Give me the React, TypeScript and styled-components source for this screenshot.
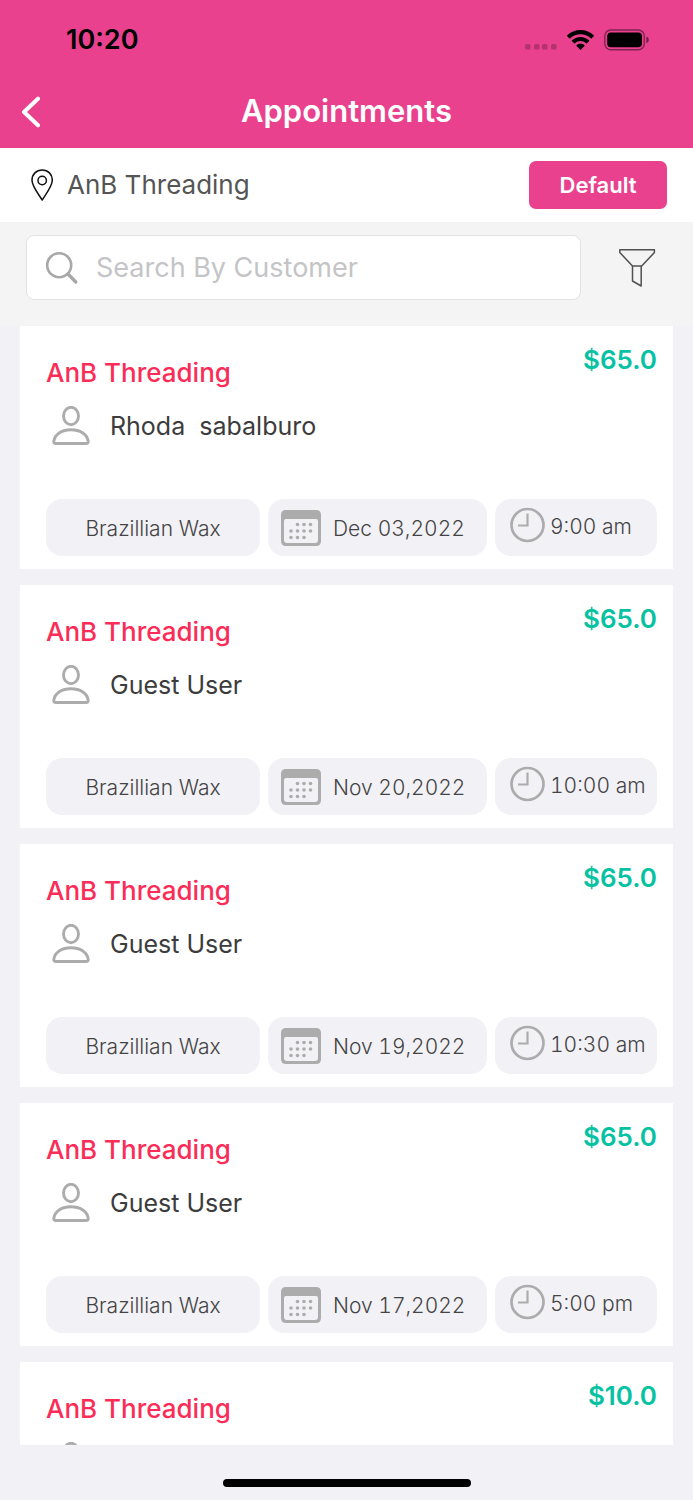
import React from "react";
import styled, { createGlobalStyle } from "styled-components";

const GlobalStyle = createGlobalStyle`
  *, *::before, *::after { box-sizing: border-box; }
  html, body { margin: 0; padding: 0; background: #f2f1f6; }
  body, button, input { font-family: Inter, "Liberation Sans", sans-serif; }
  svg { display: block; flex: none; }
`;

const Screen = styled.div`
  display: flex;
  flex-direction: column;
  height: 100vh;
  background: #f2f1f6;
`;

const Header = styled.header`
  flex: none;
  background: #e9418e;
`;

const StatusBar = styled.div`
  display: flex;
  align-items: center;
  justify-content: space-between;
  height: 74px;
  padding: 6px 44px 0 66px;
`;

const StatusTime = styled.span`
  color: #000;
  font-size: 27px;
  font-weight: 600;
  line-height: 32px;
`;

const StatusIcons = styled.div`
  display: flex;
  align-items: center;
  gap: 10px;
`;

const NavBar = styled.div`
  display: grid;
  grid-template-columns: 60px 1fr 60px;
  align-items: center;
  height: 74px;
`;

const BackButton = styled.button`
  display: flex;
  align-items: center;
  height: 48px;
  padding: 2px 0 0 20px;
  border: 0;
  background: none;
  cursor: pointer;
`;

const NavTitle = styled.h1`
  margin: 0;
  color: #fff;
  font-size: 31px;
  font-weight: 600;
  line-height: 40px;
  text-align: center;
`;

const LocationBar = styled.div`
  display: flex;
  flex: none;
  align-items: center;
  gap: 14px;
  height: 74px;
  padding: 0 26px 0 31px;
  background: #fff;
`;

const LocationName = styled.span`
  flex: 1;
  color: #555;
  font-size: 26px;
  line-height: 40px;
`;

const DefaultButton = styled.button`
  width: 138px;
  height: 48px;
  padding: 0;
  border: 0;
  border-radius: 7px;
  background: #e9418e;
  color: #fff;
  font-size: 22px;
  font-weight: 600;
  cursor: pointer;
`;

const SearchBar = styled.form`
  display: flex;
  flex: none;
  align-items: center;
  gap: 36px;
  padding: 13px 36px 26px 26px;
  background: #f4f4f4;
`;

const SearchField = styled.label`
  display: flex;
  flex: 1;
  align-items: center;
  gap: 17px;
  min-width: 0;
  height: 65px;
  padding: 0 18px;
  border: 1px solid #e2e2e2;
  border-radius: 8px;
  background: #fff;
`;

const SearchInput = styled.input`
  flex: 1;
  min-width: 0;
  height: 40px;
  padding: 0;
  border: 0;
  outline: 0;
  background: none;
  color: #444;
  font-size: 27px;

  &::placeholder { color: #c4c4c6; opacity: 1; }
`;

const IconButton = styled.button`
  padding: 0;
  border: 0;
  background: none;
  cursor: pointer;
`;

const List = styled.ul`
  display: flex;
  flex: 1;
  flex-direction: column;
  gap: 16px;
  min-height: 0;
  margin: 0;
  padding: 0 20px;
  overflow-y: auto;
  scrollbar-width: none;
  list-style: none;
`;

const Card = styled.li`
  flex: none;
  padding: 13px 16px 13px 26px;
  background: #fff;
`;

const CardHeader = styled.div`
  display: flex;
  align-items: flex-start;
  justify-content: space-between;
`;

const Salon = styled.h2`
  margin: 0;
  padding-top: 14px;
  color: #fb2d58;
  font-size: 26px;
  font-weight: 500;
  line-height: 40px;
`;

const Price = styled.span`
  color: #06c2a2;
  font-size: 26px;
  font-weight: 600;
  line-height: 42px;
`;

const Customer = styled.div`
  display: flex;
  align-items: center;
  gap: 20px;
  padding: 13px 0 53px 6px;
  color: #3c3c3c;
  font-size: 25px;
  line-height: 40px;
  white-space: pre;
`;

const Chips = styled.div`
  display: grid;
  grid-template-columns: 214fr 219fr 162fr;
  gap: 8px;
`;

const Chip = styled.span<{ $gap?: number; $pad?: number; $center?: boolean }>`
  display: flex;
  align-items: center;
  justify-content: ${(p) => (p.$center ? "center" : "flex-start")};
  gap: ${(p) => p.$gap ?? 0}px;
  height: 57px;
  padding-top: 1px;
  padding-left: ${(p) => p.$pad ?? 0}px;
  border-radius: 16px;
  background: #f2f1f6;
  color: #444;
  font-size: 21px;
  font-weight: 300;
  font-variant-numeric: tabular-nums;
  white-space: nowrap;
`;

const HomeArea = styled.footer`
  display: flex;
  flex: none;
  align-items: flex-end;
  justify-content: center;
  height: 55px;
  padding-bottom: 13px;
`;

const HomeIndicator = styled.span`
  width: 248px;
  height: 8px;
  border-radius: 4px;
  background: #000;
`;

const SignalDots = () => (
  <svg width="32" height="22" viewBox="0 0 32 22" fill="#000" opacity="0.22" aria-hidden="true">
    {[0, 9, 17, 26].map((x) => (
      <rect key={x} x={x} y="15" width="5.5" height="5.5" rx="1.6" />
    ))}
  </svg>
);

const WifiIcon = () => (
  <svg width="27" height="22" viewBox="0 0 27 22" fill="#000" aria-hidden="true">
    <path d="M13.500 1C18.700 1 23.300 3 26.700 6.300Q27.100 6.800 26.700 7.300L24.700 9.300Q24.200 9.700 23.700 9.300C21 6.700 17.400 5.200 13.500 5.200S6 6.700 3.300 9.300Q2.800 9.700 2.300 9.300L.3 7.300Q-.1 6.800 .3 6.300C3.700 3 8.300 1 13.500 1Z" />
    <path d="M13.500 7.900c3.300 0 6.300 1.300 8.500 3.300q.5.500 0 1l-2.100 2q-.4.400-.9 0c-1.500-1.300-3.400-2.100-5.500-2.100s-4 .8-5.500 2.100q-.5.400-.9 0l-2.100-2q-.5-.5 0-1c2.200-2 5.200-3.300 8.500-3.300Z" />
    <path d="M13.500 14.700c1.500 0 2.800.5 3.900 1.400q.4.400 0 .8l-3.400 3.700q-.5.500-1 0l-3.400-3.700q-.4-.4 0-.8c1.100-.9 2.400-1.400 3.900-1.400Z" />
  </svg>
);

const BatteryIcon = () => (
  <svg width="45" height="22" viewBox="0 0 45 22" aria-hidden="true">
    <rect x=".8" y="1" width="39.500" height="19.800" rx="6" fill="none" stroke="#000" strokeOpacity=".45" strokeWidth="1.400" />
    <rect x="3.200" y="3.500" width="34.800" height="14.800" rx="3.800" fill="#000" />
    <path d="M42.300 7.600c1.600.6 2.500 1.900 2.500 3.300s-.9 2.700-2.500 3.300Z" fill="#000" fillOpacity=".5" />
  </svg>
);

const BackIcon = () => (
  <svg width="22" height="32" viewBox="0 0 22 32" fill="none" stroke="#fff" strokeWidth="4" strokeLinecap="round" strokeLinejoin="round" aria-hidden="true">
    <path d="M18 2.700 4 16l14 13.300" />
  </svg>
);

const PinIcon = () => (
  <svg width="22" height="32" viewBox="0 0 22 32" fill="none" stroke="#111" strokeWidth="1.500" strokeLinejoin="round" aria-hidden="true">
    <path d="M11.200 31C7.700 25.300 1 17.300 1 11.200 1 5.200 5.300 1 11.200 1s10.100 4.200 10.100 10.200c0 6.100-6.600 14.100-10.100 19.800Z" />
    <circle cx="11.200" cy="11.500" r="4.200" />
  </svg>
);

const SearchIcon = () => (
  <svg width="34" height="34" viewBox="0 0 34 34" fill="none" stroke="#a8a8a8" strokeLinecap="round" aria-hidden="true">
    <circle cx="14.200" cy="14.200" r="12" strokeWidth="2.600" />
    <path d="m23 23 7.800 8" strokeWidth="3.400" />
  </svg>
);

const FilterIcon = () => (
  <svg width="40" height="40" viewBox="0 0 40 40" fill="none" stroke="#505050" strokeWidth="1.500" strokeLinejoin="round" aria-hidden="true">
    <path d="M2.800 1.700h34.600v2.800L24.700 18h-9.200L2.800 4.500ZM15.500 18v15l8.700 5V18" />
  </svg>
);

const PersonIcon = () => (
  <svg width="38" height="40" viewBox="0 0 38 40" fill="none" stroke="#acacac" strokeWidth="2.900" aria-hidden="true">
    <ellipse cx="19" cy="10" rx="7.500" ry="8.700" />
    <path d="M4 37.500h30q2.500 0 2.200-2.300C35 28 28 23.700 19 23.700S3 28 1.800 35.200Q1.500 37.500 4 37.500Z" />
  </svg>
);

const calendarDots = [
  [16.5, 14.5], [23, 14.5], [29.5, 14.5],
  [10, 21], [16.5, 21], [23, 21], [29.5, 21],
  [10, 27.5], [16.5, 27.5], [23, 27.5],
];

const CalendarIcon = () => (
  <svg width="40" height="36" viewBox="0 0 40 36" aria-hidden="true">
    <path fill="#acacac" fillRule="evenodd" d="M5 0h30q5 0 5 5v26q0 5-5 5H5q-5 0-5-5V5q0-5 5-5ZM5 9q-2 0-2 2v19q0 3 3 3h28q3 0 3-3V11q0-2-2-2Z" />
    {calendarDots.map(([x, y]) => (
      <circle key={`${x}-${y}`} cx={x} cy={y} r="1.800" fill="#acacac" />
    ))}
  </svg>
);

const ClockIcon = () => (
  <svg width="35" height="42" viewBox="0 0 35 42" fill="none" stroke="#acacac" aria-hidden="true">
    <circle cx="17.500" cy="18" r="16" strokeWidth="2.700" />
    <path d="M17.500 6.500v12H8" strokeWidth="2.200" />
  </svg>
);

const TimeText = styled.time`
  padding-bottom: 4px;
`;

type Appointment = {
  id: number;
  price: string;
  customer?: string;
  date?: string;
  time?: string;
};

const appointments: Appointment[] = [
  { id: 1, customer: "Rhoda  sabalburo", price: "$65.0", date: "Dec 03,2022", time: "9:00 am" },
  { id: 2, customer: "Guest User", price: "$65.0", date: "Nov 20,2022", time: "10:00 am" },
  { id: 3, customer: "Guest User", price: "$65.0", date: "Nov 19,2022", time: "10:30 am" },
  { id: 4, customer: "Guest User", price: "$65.0", date: "Nov 17,2022", time: "5:00 pm" },
  { id: 5, price: "$10.0" },
];

const AppointmentCard = ({ customer, price, date, time }: Appointment) => (
  <Card>
    <CardHeader>
      <Salon>AnB Threading</Salon>
      <Price>{price}</Price>
    </CardHeader>
    <Customer>
      <PersonIcon />
      {customer}
    </Customer>
    {date && time && (
      <Chips>
        <Chip $center>Brazillian Wax</Chip>
        <Chip $pad={13} $gap={12}>
          <CalendarIcon />
          <time>{date}</time>
        </Chip>
        <Chip $pad={15} $gap={5}>
          <ClockIcon />
          <TimeText>{time}</TimeText>
        </Chip>
      </Chips>
    )}
  </Card>
);

export default function App() {
  return (
    <Screen>
      <GlobalStyle />
      <Header>
        <StatusBar>
          <StatusTime>10:20</StatusTime>
          <StatusIcons>
            <SignalDots />
            <WifiIcon />
            <BatteryIcon />
          </StatusIcons>
        </StatusBar>
        <NavBar>
          <BackButton type="button" aria-label="Back">
            <BackIcon />
          </BackButton>
          <NavTitle>Appointments</NavTitle>
        </NavBar>
      </Header>
      <LocationBar>
        <PinIcon />
        <LocationName>AnB Threading</LocationName>
        <DefaultButton type="button">Default</DefaultButton>
      </LocationBar>
      <SearchBar onSubmit={(e) => e.preventDefault()}>
        <SearchField>
          <SearchIcon />
          <SearchInput type="text" placeholder="Search By Customer" aria-label="Search By Customer" />
        </SearchField>
        <IconButton type="button" aria-label="Filter">
          <FilterIcon />
        </IconButton>
      </SearchBar>
      <List>
        {appointments.map((a) => (
          <AppointmentCard key={a.id} {...a} />
        ))}
      </List>
      <HomeArea>
        <HomeIndicator />
      </HomeArea>
    </Screen>
  );
}
